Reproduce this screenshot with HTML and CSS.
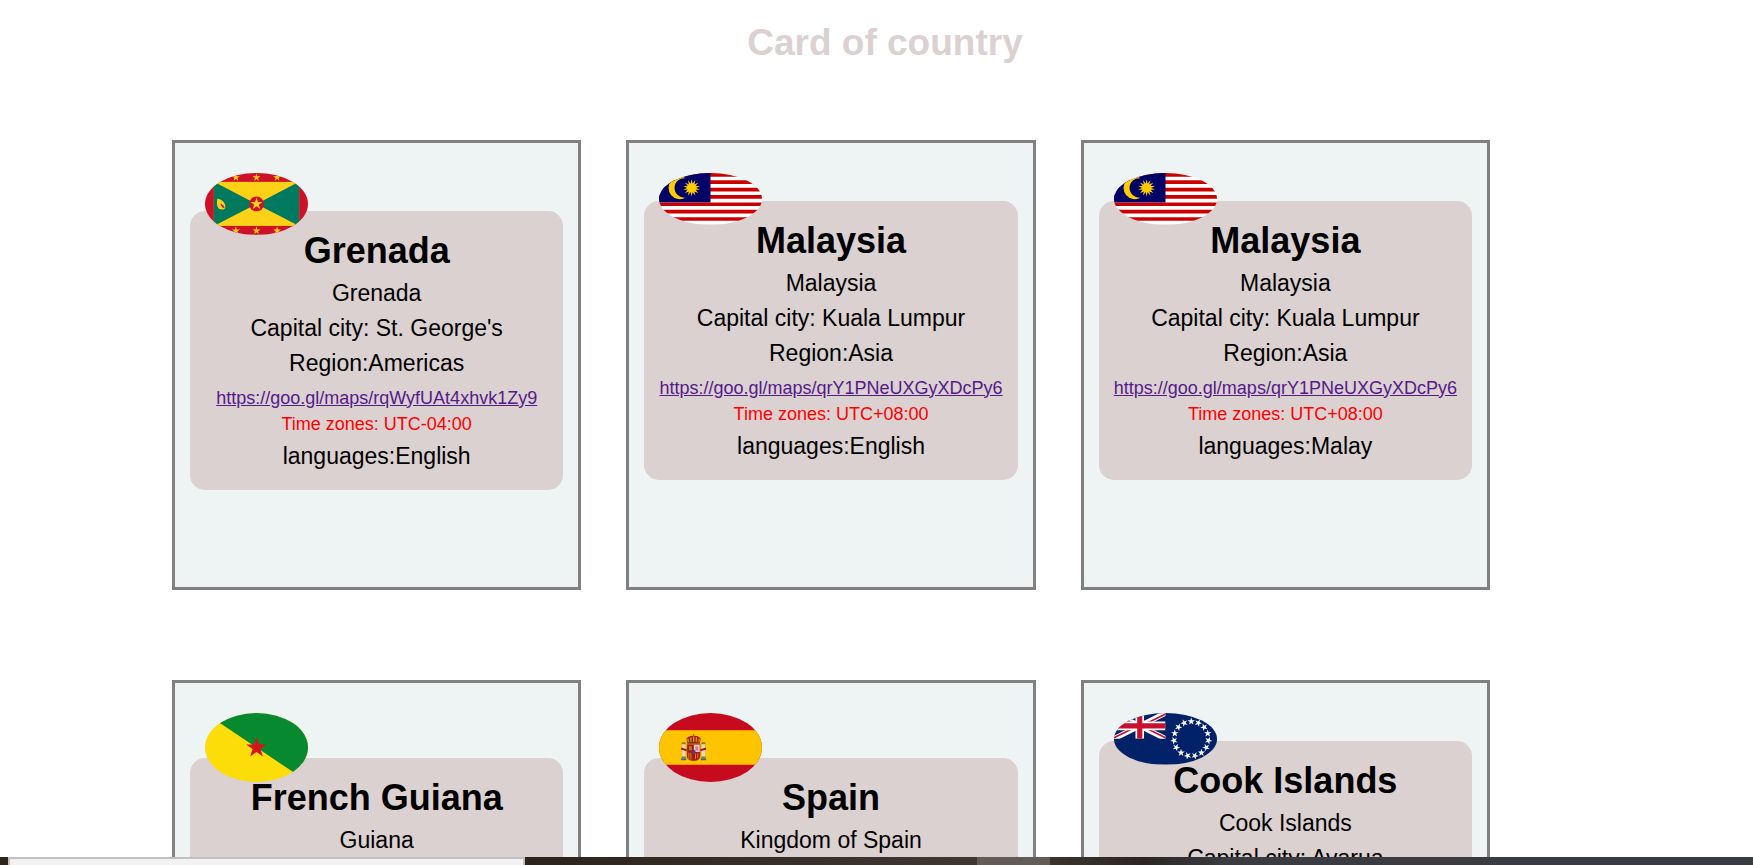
FILE: index.html
```html
<!DOCTYPE html>
<html lang="en">
<head>
<meta charset="utf-8">
<title>Card of country</title>
<link rel="stylesheet" href="styles.css">
</head>
<body>
<svg class="defs" aria-hidden="true">
  <defs>
    <polygon id="star" points="0,-10 2.25,-3.09 9.51,-3.09 3.63,1.18 5.88,8.09 0,3.82 -5.88,8.09 -3.63,1.18 -9.51,-3.09 -2.25,-3.09"/>
    <g id="malaysia">
      <rect width="100" height="50" fill="#fff"/>
      <path stroke="#cc0000" stroke-width="3.57" d="M0 1.79H100M0 8.93H100M0 16.07H100M0 23.21H100M0 30.36H100M0 37.5H100M0 44.64H100"/>
      <rect width="50" height="28.57" fill="#000066"/>
      <path fill="#ffcc00" d="M26 5.1A11 11 0 1 0 26 23.9A9.5 9.5 0 1 1 26 5.1Z"/>
      <g fill="#ffcc00" transform="translate(31.7 14.4)">
        <circle r="4.2"/>
        <path id="ray" d="M-1 -4L0 -8.4L1 -4V4L0 8.4L-1 4Z"/>
        <use href="#ray" transform="rotate(25.71)"/><use href="#ray" transform="rotate(51.43)"/><use href="#ray" transform="rotate(77.14)"/><use href="#ray" transform="rotate(102.86)"/><use href="#ray" transform="rotate(128.57)"/><use href="#ray" transform="rotate(154.29)"/>
      </g>
    </g>
  </defs>
</svg>
<div class="page">
  <main class="content">
    <h1 class="title">Card of country</h1>
    <section class="cards">
      <article class="card">
        <svg class="flag" viewBox="0 0 100 60" role="img" aria-label="Flag of Grenada">
          <rect width="100" height="60" fill="#ce1126"/>
          <rect x="8.6" y="8.6" width="82.8" height="42.8" fill="#fcd116"/>
          <path fill="#007a5e" d="M8.6 8.6L50 30L8.6 51.4ZM91.4 8.6L50 30L91.4 51.4Z"/>
          <circle cx="50" cy="30" r="7.2" fill="#ce1126"/>
          <g fill="#fcd116">
            <use href="#star" transform="translate(50 30) scale(.62)"/>
            <use href="#star" transform="translate(30 4.4) scale(.4)"/><use href="#star" transform="translate(50 4.4) scale(.4)"/><use href="#star" transform="translate(70 4.4) scale(.4)"/>
            <use href="#star" transform="translate(30 56) scale(.4)"/><use href="#star" transform="translate(50 56) scale(.4)"/><use href="#star" transform="translate(70 56) scale(.4)"/>
            <path d="M12 24.8C16 25.5 20.5 29 19.6 34.2C18.5 35.8 15.5 35.6 13.5 34.6C11 32 11.5 28 12 24.8Z"/>
          </g>
          <path fill="#ce1126" d="M15 29.5C17.5 30.5 18.6 32 19 34.2C17 33.8 15.4 32.2 15 29.5Z"/>
        </svg>
        <div class="info">
          <h2 class="name">Grenada</h2>
          <p class="line">Grenada</p>
          <p class="line">Capital city: St. George's</p>
          <p class="line">Region:Americas</p>
          <a class="map" href="https://goo.gl/maps/rqWyfUAt4xhvk1Zy9">https://goo.gl/maps/rqWyfUAt4xhvk1Zy9</a>
          <p class="zone">Time zones: UTC-04:00</p>
          <p class="line">languages:English</p>
        </div>
      </article>
      <article class="card">
        <svg class="flag" viewBox="0 0 100 50" role="img" aria-label="Flag of Malaysia"><use href="#malaysia"/></svg>
        <div class="info">
          <h2 class="name">Malaysia</h2>
          <p class="line">Malaysia</p>
          <p class="line">Capital city: Kuala Lumpur</p>
          <p class="line">Region:Asia</p>
          <a class="map" href="https://goo.gl/maps/qrY1PNeUXGyXDcPy6">https://goo.gl/maps/qrY1PNeUXGyXDcPy6</a>
          <p class="zone">Time zones: UTC+08:00</p>
          <p class="line">languages:English</p>
        </div>
      </article>
      <article class="card">
        <svg class="flag" viewBox="0 0 100 50" role="img" aria-label="Flag of Malaysia"><use href="#malaysia"/></svg>
        <div class="info">
          <h2 class="name">Malaysia</h2>
          <p class="line">Malaysia</p>
          <p class="line">Capital city: Kuala Lumpur</p>
          <p class="line">Region:Asia</p>
          <a class="map" href="https://goo.gl/maps/qrY1PNeUXGyXDcPy6">https://goo.gl/maps/qrY1PNeUXGyXDcPy6</a>
          <p class="zone">Time zones: UTC+08:00</p>
          <p class="line">languages:Malay</p>
        </div>
      </article>
      <article class="card">
        <svg class="flag" viewBox="0 0 100 67" role="img" aria-label="Flag of French Guiana">
          <rect width="100" height="67" fill="#fcdd09"/>
          <path fill="#078930" d="M0 0L100 67V0Z"/>
          <use href="#star" fill="#da121a" transform="translate(50 33.8) scale(1.05)"/>
        </svg>
        <div class="info">
          <h2 class="name">French Guiana</h2>
          <p class="line">Guiana</p>
        </div>
      </article>
      <article class="card">
        <svg class="flag" viewBox="0 0 100 67" role="img" aria-label="Flag of Spain">
          <rect width="100" height="67" fill="#c60b1e"/>
          <rect y="16.75" width="100" height="33.5" fill="#ffc400"/>
          <g>
            <path fill="#d9dde0" d="M22.6 30h2.8v13h-2.8zM41.8 30h2.8v13h-2.8z"/>
            <path fill="#ad1519" d="M21.5 33.5l5.5 1.6v2l-5.5-1.4zM45.7 33.5l-5.5 1.6v2l5.5-1.4z"/>
            <path fill="#9a7a12" d="M22 28.5h4v1.8h-4zM41.2 28.5h4v1.8h-4zM22 42.3h4v1.5h-4zM41.2 42.3h4v1.5h-4z"/>
            <path fill="#336a9c" d="M21.5 44h5v1.8h-5zM40.7 44h5v1.8h-5z"/>
            <path fill="#ad1519" d="M27.5 29.5L26.6 24.8Q28.8 21.8 33.6 22Q38.4 21.8 40.6 24.8L39.7 29.5Z"/>
            <path fill="none" stroke="#c8b100" stroke-width="1.2" d="M28.5 28.5L28 25M31 28V23.5M33.6 28V21M36.2 28V23.5M38.7 28.5L39.2 25"/>
            <path stroke="#7c5a12" stroke-width="1" d="M27.4 29.3H39.8M33.6 20.5V23"/>
            <path fill="#ad1519" stroke="#7c4a18" stroke-width=".5" d="M27.3 30.5H39.9V42Q39.9 46 33.6 46.4Q27.3 46 27.3 42Z"/>
            <path fill="#e5c4cf" d="M33.8 30.8h5.8v7h-5.8z"/>
            <path fill="#cf7f92" d="M35.5 32.5h2.5v3.8h-2.5z"/>
            <path fill="#a47f12" d="M29 32.2h3v4h-3z"/>
            <path stroke="#d9a520" stroke-width=".8" d="M29 38.5V44.5M31 38.5V45.3M35.5 39V44.7M37.7 39V44"/>
            <ellipse cx="33.6" cy="38" rx="1.7" ry="2" fill="#3a4a98" stroke="#ad1519" stroke-width=".6"/>
          </g>
        </svg>
        <div class="info">
          <h2 class="name">Spain</h2>
          <p class="line">Kingdom of Spain</p>
        </div>
      </article>
      <article class="card">
        <svg class="flag" viewBox="0 0 100 50" role="img" aria-label="Flag of the Cook Islands">
          <rect width="100" height="50" fill="#012169"/>
          <svg width="50" height="25" viewBox="0 0 50 25">
            <path stroke="#fff" stroke-width="5" d="M0 0L50 25M50 0L0 25"/>
            <path stroke="#c8102e" stroke-width="1.7" d="M0 .9L25 13.4M25 11.6L50 24.1M50 .9L25 13.4M25 11.6L0 24.1"/>
            <path stroke="#fff" stroke-width="8.3" d="M25 0V25M0 12.5H50"/>
            <path stroke="#c8102e" stroke-width="5" d="M25 0V25M0 12.5H50"/>
          </svg>
          <g fill="#fff" transform="translate(75 25)">
            <use id="s" href="#star" transform="translate(0 -16.8) scale(.38)"/>
            <g transform="rotate(24)"><use href="#s"/></g><g transform="rotate(48)"><use href="#s"/></g><g transform="rotate(72)"><use href="#s"/></g><g transform="rotate(96)"><use href="#s"/></g><g transform="rotate(120)"><use href="#s"/></g><g transform="rotate(144)"><use href="#s"/></g><g transform="rotate(168)"><use href="#s"/></g><g transform="rotate(192)"><use href="#s"/></g><g transform="rotate(216)"><use href="#s"/></g><g transform="rotate(240)"><use href="#s"/></g><g transform="rotate(264)"><use href="#s"/></g><g transform="rotate(288)"><use href="#s"/></g><g transform="rotate(312)"><use href="#s"/></g><g transform="rotate(336)"><use href="#s"/></g>
          </g>
        </svg>
        <div class="info">
          <h2 class="name">Cook Islands</h2>
          <p class="line">Cook Islands</p>
          <p class="line">Capital city: Avarua</p>
        </div>
      </article>
    </section>
  </main>
  <footer class="taskbar"><div class="search"></div><div class="tasks"></div></footer>
</div>
</body>
</html>
```
FILE: styles.css
```css
* { box-sizing: border-box; }
body { margin: 0; background: #fff; color: #000; font-family: "Liberation Sans", Arial, sans-serif; }
h1, h2, p { margin: 0; }
.defs { display: block; width: 0; height: 0; }

.page { display: flex; flex-direction: column; height: 100vh; }
.content { flex: 1; min-height: 0; overflow: hidden; }

.title {
  padding: 20px 0 0 17px;
  text-align: center;
  font-size: 37px;
  line-height: 46px;
  color: #dbd1d0;
}
.cards {
  display: grid;
  grid-template-columns: repeat(3, 1fr);
  gap: 90px 45px;
  margin: 74px 15% 0 172px;
}
.card {
  min-height: 450px;
  padding: 30px 15px 15px;
  border: 3px solid #808080;
  background: #eef3f4;
}
.flag {
  display: block;
  position: relative;
  width: 27%;
  min-width: 103px;
  margin-left: 15px;
  border-radius: 50%;
}
.info {
  margin-top: -24px;
  padding: 20px 15px 16px;
  border-radius: 15px;
  background: #dbd1d0;
  text-align: center;
}
.name { margin-bottom: 5px; font-size: 36px; line-height: 40px; }
.line { font-size: 23px; line-height: 35px; }
.map { display: block; margin-top: 4px; font-size: 18px; line-height: 26px; white-space: nowrap; color: #551a8b; }
.zone { margin-bottom: 2px; font-size: 18px; line-height: 26px; color: #f00; }

.taskbar { display: flex; height: 8px; background: #2e241c; }
.search {
  width: 517px;
  margin-left: 8px;
  border: 2px solid #c0c0c0;
  border-bottom: 0;
  background: #f2f2f2;
}
.tasks {
  flex: 1;
  background:
    linear-gradient(#625c58, #625c58) 452px 0 / 73px 100% no-repeat,
    linear-gradient(90deg, #2c231c, #403733 440px, #38342c 530px, #2b2624 620px, #3a3c41 700px);
}
```
